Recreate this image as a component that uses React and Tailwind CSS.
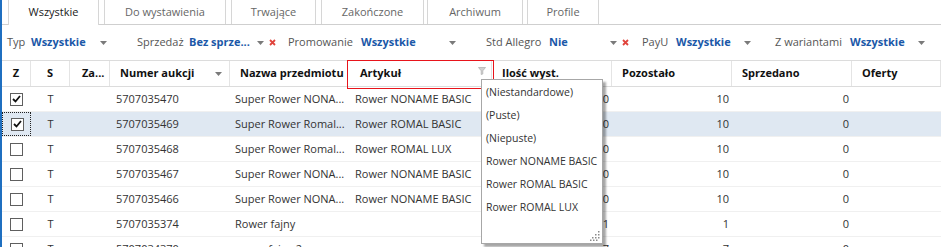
const tabs = [
  { label: "Wszystkie", w: "w-[91px]", ml: "ml-0", active: true },
  { label: "Do wystawienia", w: "w-[122px]", ml: "ml-[5px]" },
  { label: "Trwające", w: "w-[85px]", ml: "ml-[5px]" },
  { label: "Zakończone", w: "w-[103px]", ml: "ml-[5px]" },
  { label: "Archiwum", w: "w-[96px]", ml: "ml-[3px]" },
  { label: "Profile", w: "w-[72px]", ml: "ml-[4px]" },
];

const filters = [
  { label: "Typ", value: "Wszystkie", gw: "w-[130px]", lw: "w-[24px]", vw: "w-[69px]" },
  { label: "Sprzedaż", value: "Bez sprze...", gw: "w-[151px]", lw: "w-[52px]", vw: "w-[68px]", clear: true },
  { label: "Promowanie", value: "Wszystkie", gw: "w-[198px]", lw: "w-[73px]", vw: "w-[88px]" },
  { label: "Std Allegro", value: "Nie", gw: "w-[156px]", lw: "w-[63px]", vw: "w-[61px]", clear: true },
  { label: "PayU", value: "Wszystkie", gw: "w-[133px]", lw: "w-[34px]", vw: "w-[68px]" },
  { label: "Z wariantami", value: "Wszystkie", gw: "w-[164px]", lw: "w-[75px]", vw: "w-[68px]" },
];

const columns = [
  { label: "Z", w: "w-[29px]", align: "justify-center" },
  { label: "S", w: "w-[39px]", align: "justify-center" },
  { label: "Za...", w: "w-[40px]", align: "pl-[12px]" },
  { label: "Numer aukcji", w: "w-[120px]", align: "pl-[10px]", sort: true },
  { label: "Nazwa przedmiotu", w: "w-[118px]", align: "pl-[10px]" },
  { label: "Artykuł", w: "w-[144px]", align: "pl-[12px]", filter: true },
  { label: "Ilość wyst.", w: "w-[120px]", align: "pl-[10px]" },
  { label: "Pozostało", w: "w-[120px]", align: "pl-[10px]" },
  { label: "Sprzedano", w: "w-[120px]", align: "pl-[10px]" },
  { label: "Oferty", w: "w-[89px]", align: "pl-[10px]" },
];

const rows = [
  { checked: true, nr: "5707035470", name: "Super Rower NONA...", art: "Rower NONAME BASIC", qty: "0", left: "10", sold: "0" },
  { checked: true, selected: true, nr: "5707035469", name: "Super Rower Romal...", art: "Rower ROMAL BASIC", qty: "0", left: "10", sold: "0" },
  { nr: "5707035468", name: "Super Rower Romal...", art: "Rower ROMAL LUX", qty: "0", left: "10", sold: "0" },
  { nr: "5707035467", name: "Super Rower NONA...", art: "Rower NONAME BASIC", qty: "0", left: "10", sold: "0" },
  { nr: "5707035466", name: "Super Rower NONA...", art: "Rower NONAME BASIC", qty: "0", left: "10", sold: "0" },
  { nr: "5707035374", name: "Rower fajny", art: "", qty: "1", left: "1", sold: "0" },
  { nr: "5707034370", name: "rower fajny 2", art: "", qty: "7", left: "7", sold: "0" },
];

const options = [
  "(Niestandardowe)",
  "(Puste)",
  "(Niepuste)",
  "Rower NONAME BASIC",
  "Rower ROMAL BASIC",
  "Rower ROMAL LUX",
];

function Arrow() {
  return (
    <svg width="7" height="4" viewBox="0 0 7 4" className="shrink-0">
      <polygon points="0,0 7,0 3.5,4" fill="#7a7a7a" />
    </svg>
  );
}

function ClearX() {
  return (
    <svg width="7" height="7" viewBox="0 0 7 7" className="ml-[5px] shrink-0">
      <path d="M1 1 L6 6 M6 1 L1 6" stroke="#e0443c" strokeWidth="1.8" />
    </svg>
  );
}

function Checkbox({ checked }) {
  return (
    <div className="w-[13px] h-[13px] border border-[#5f5f5f] bg-white flex items-center justify-center">
      {checked && (
        <svg width="9" height="8" viewBox="0 0 9 8">
          <path d="M1 4 L3.5 6.5 L8 1" stroke="#111" strokeWidth="1.8" fill="none" />
        </svg>
      )}
    </div>
  );
}

export default function App() {
  return (
    <div className="relative w-[941px] h-[247px] overflow-hidden bg-white border-l-2 border-[#1f6fc0] font-['Open_Sans',sans-serif] text-[#333]">
      {/* tabs */}
      <div className="flex items-start h-[25px] border-b border-[#cfcfcf] pl-[6px] text-[11px]">
        {tabs.map((t) => (
          <div
            key={t.label}
            className={`${t.w} ${t.ml} flex items-center justify-center border-x border-[#d6d6d6] ${
              t.active ? "h-[25px] -mb-px bg-white relative z-10 text-[#1a1a1a]" : "h-[24px] text-[#666]"
            }`}
          >
            {t.label}
          </div>
        ))}
      </div>

      {/* filters */}
      <div className="flex items-center h-[35px] pl-[5px] text-[11px]">
        {filters.map((f) => (
          <div key={f.label} className={`${f.gw} flex items-center shrink-0`}>
            <span className={`${f.lw} shrink-0 text-[#555] whitespace-nowrap`}>{f.label}</span>
            <span className={`${f.vw} shrink-0 font-bold text-[#1b58a8] whitespace-nowrap`}>{f.value}</span>
            <Arrow />
            {f.clear && <ClearX />}
          </div>
        ))}
      </div>

      {/* table header */}
      <div className="flex h-[27px] border-y border-[#dcdcdc] text-[11px] font-bold text-[#111]">
        {columns.map((c) => (
          <div
            key={c.label}
            className={`${c.w} ${c.align} shrink-0 flex items-center border-r border-[#e4e4e4] whitespace-nowrap overflow-hidden`}
          >
            <span>{c.label}</span>
            {c.sort && (
              <span className="ml-auto mr-[7px] flex">
                <Arrow />
              </span>
            )}
            {c.filter && (
              <svg width="8" height="8" viewBox="0 0 8 8" className="ml-auto mr-[5px] mb-[6px]">
                <path d="M0.5 0.5 H7.5 L4.8 3.8 V7 L3.2 7.5 V3.8 Z" fill="#d0d0d0" stroke="#b4b4b4" strokeWidth="0.8" />
              </svg>
            )}
          </div>
        ))}
      </div>

      {/* rows */}
      <div className="text-[11px]">
        {rows.map((r) => (
          <div
            key={r.nr}
            className={`flex h-[25px] border-b border-[#f0f0f0] ${r.selected ? "bg-[#dfe8f2]" : ""}`}
          >
            <div
              className={`w-[29px] shrink-0 flex items-center pl-[8px] ${
                r.selected ? "border border-dotted border-[#222] pl-[7px]" : ""
              }`}
            >
              <Checkbox checked={r.checked} />
            </div>
            <div className="w-[39px] shrink-0 flex items-center justify-center">T</div>
            <div className="w-[40px] shrink-0" />
            <div className="w-[120px] shrink-0 flex items-center pl-[6px]">{r.nr}</div>
            <div className="w-[118px] shrink-0 flex items-center pl-[5px] whitespace-nowrap">{r.name}</div>
            <div className="w-[144px] shrink-0 flex items-center pl-[7px] whitespace-nowrap">{r.art}</div>
            <div className="w-[120px] shrink-0 flex items-center justify-end pr-[3px]">{r.qty}</div>
            <div className="w-[120px] shrink-0 flex items-center justify-end pr-[3px]">{r.left}</div>
            <div className="w-[120px] shrink-0 flex items-center justify-end pr-[3px]">{r.sold}</div>
            <div className="w-[89px] shrink-0" />
          </div>
        ))}
      </div>

      {/* highlighted column header */}
      <div className="absolute left-[345px] top-[60px] w-[147px] h-[29px] border border-[#e8141b] z-20" />

      {/* filter dropdown */}
      <div className="absolute left-[479px] top-[79px] w-[122px] h-[165px] bg-white border border-[#a7a7a7] shadow-[3px_3px_2px_rgba(0,0,0,0.35)] z-30 pt-px text-[10.5px] text-[#333]">
        {options.map((o) => (
          <div key={o} className="h-[23px] flex items-center pl-[4px] whitespace-nowrap">
            {o}
          </div>
        ))}
        <svg width="10" height="10" viewBox="0 0 10 10" className="absolute right-[2px] bottom-[2px]">
          <g fill="#8a8a8a">
            <rect x="8" y="0" width="1.5" height="1.5" />
            <rect x="5" y="3" width="1.5" height="1.5" />
            <rect x="8" y="3" width="1.5" height="1.5" />
            <rect x="2" y="6" width="1.5" height="1.5" />
            <rect x="5" y="6" width="1.5" height="1.5" />
            <rect x="8" y="6" width="1.5" height="1.5" />
            <rect x="0" y="8.5" width="1.5" height="1.5" />
            <rect x="3" y="8.5" width="1.5" height="1.5" />
            <rect x="6" y="8.5" width="1.5" height="1.5" />
          </g>
        </svg>
      </div>
    </div>
  );
}
